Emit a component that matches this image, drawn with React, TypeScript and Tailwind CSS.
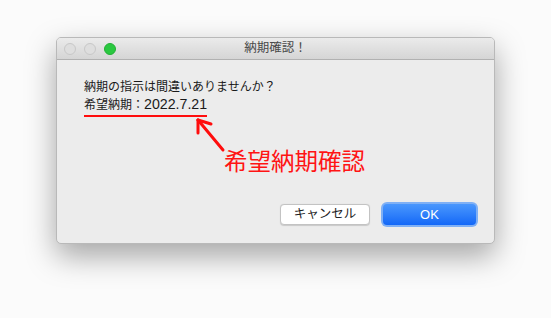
import React from "react";

export default function App() {
  const font = { fontFamily: '"Liberation Sans", "Noto Sans CJK JP", sans-serif' };
  return (
    <div className="w-[551px] h-[318px] bg-[#fbfbfb] relative overflow-hidden" style={font}>
      <div className="absolute left-[56px] top-[37px] w-[439px] h-[207px] rounded-[5px] bg-[#ececec] border border-[#b9b9b9] shadow-[0_12px_30px_rgba(0,0,0,0.35)] flex flex-col overflow-hidden">
        <div className="h-[22px] flex items-center relative bg-gradient-to-b from-[#ebebeb] to-[#d5d5d5] border-b border-[#b1b1b1]">
          <div className="flex items-center gap-[8px] pl-[7px]">
            <div className="w-[12px] h-[12px] rounded-full bg-[#dedede] border border-[#c8c8c8]" />
            <div className="w-[12px] h-[12px] rounded-full bg-[#dedede] border border-[#c8c8c8]" />
            <div className="w-[12px] h-[12px] rounded-full bg-[#2ac840] border border-[#22b035]" />
          </div>
          <div className="absolute inset-0 flex items-center justify-center text-[12.5px] text-[#4a4a4a]">納期確認！</div>
        </div>
        <div className="flex-1 flex flex-col pl-[27px] pt-[19px] text-[12px] text-[#1a1a1a] leading-[17px]">
          <div>納期の指示は間違いありませんか？</div>
          <div className="self-start border-b-2 border-[#ff0d0d] pb-[1px]">
            希望納期：<span className="text-[14.2px]">2022.7.21</span>
          </div>
          <div className="flex-1" />
          <div className="flex justify-end items-center gap-[11px] pb-[16px] pr-[16px]">
            <div className="w-[90px] h-[21px] rounded-[4px] bg-white border border-[#c3c3c3] shadow-[0_0.5px_1px_rgba(0,0,0,0.15)] flex items-center justify-center text-[12.5px] text-[#222]">キャンセル</div>
            <div className="w-[97px] h-[25px] rounded-[6px] bg-[#7fb0f5] p-[2px]">
              <div className="w-full h-full rounded-[4px] bg-gradient-to-b from-[#4a97fd] to-[#1267f7] flex items-center justify-center text-white text-[13px] font-medium">OK</div>
            </div>
          </div>
        </div>
      </div>
      <svg className="absolute left-0 top-0" width="551" height="318">
        <g stroke="#ff0d0d" strokeWidth="3" strokeLinecap="round" fill="none">
          <line x1="198" y1="120" x2="223" y2="150" />
          <line x1="198" y1="120" x2="211" y2="124" />
          <line x1="198" y1="120" x2="198" y2="133" />
        </g>
      </svg>
      <div className="absolute left-[224px] top-[149px] text-[23.5px] leading-[26px] text-[#ff1414]">希望納期確認</div>
    </div>
  );
}
